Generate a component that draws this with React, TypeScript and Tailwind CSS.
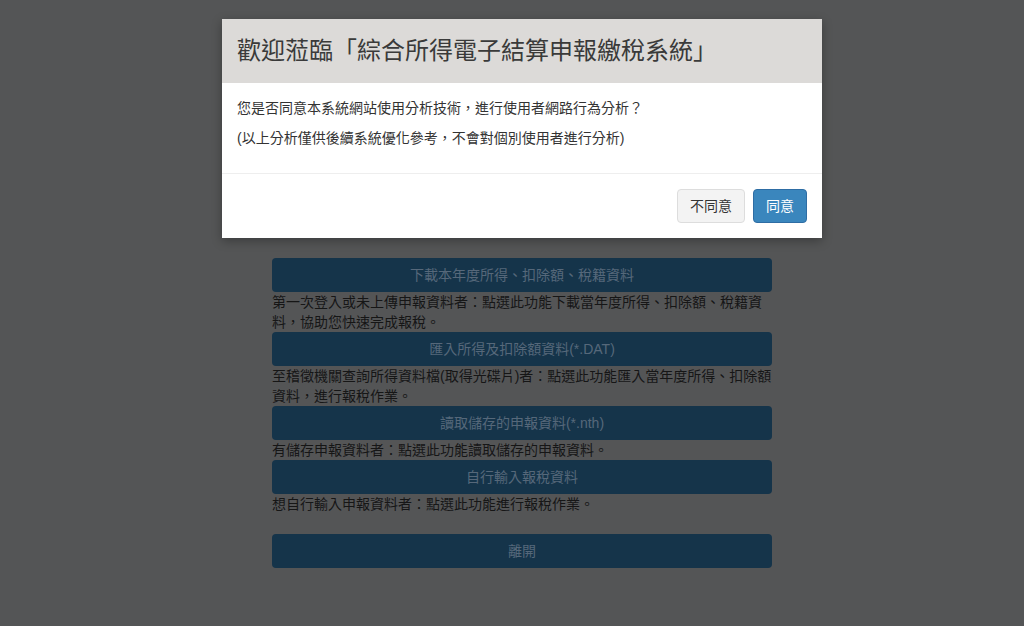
import React from 'react';

const font = { fontFamily: '"Liberation Sans", "Noto Sans CJK TC", sans-serif' };

// 背景頁面上的功能按鈕與說明
const actions = [
  {
    label: '下載本年度所得、扣除額、稅籍資料',
    desc: '第一次登入或未上傳申報資料者：點選此功能下載當年度所得、扣除額、稅籍資料，協助您快速完成報稅。',
  },
  {
    label: '匯入所得及扣除額資料(*.DAT)',
    desc: '至稽徵機關查詢所得資料檔(取得光碟片)者：點選此功能匯入當年度所得、扣除額資料，進行報稅作業。',
  },
  {
    label: '讀取儲存的申報資料(*.nth)',
    desc: '有儲存申報資料者：點選此功能讀取儲存的申報資料。',
  },
  {
    label: '自行輸入報稅資料',
    desc: '想自行輸入申報資料者：點選此功能進行報稅作業。',
  },
];

const App = () => {
  return (
    <div className="relative min-h-screen bg-[#545556] overflow-hidden" style={font}>
      {/* Page behind the modal (already dimmed) */}
      <div className="flex justify-center pl-[20px] pt-[258px]">
        <div className="w-[500px] flex flex-col text-[14px] leading-[20px]">
          {actions.map(a => (
            <div key={a.label}>
              <div className="h-[34px] rounded-[4px] bg-[#15344a] text-[#56687a] flex items-center justify-center">
                {a.label}
              </div>
              <p className="text-[#161616]">{a.desc}</p>
            </div>
          ))}
          <div className="mt-[20px] h-[34px] rounded-[4px] bg-[#15344a] text-[#56687a] flex items-center justify-center">
            離開
          </div>
        </div>
      </div>

      {/* Modal */}
      <div className="absolute left-[222px] top-[19px] w-[600px] bg-white shadow-[0_3px_10px_rgba(0,0,0,0.3)]">
        <div className="bg-[#dcdad8] px-[15px] py-[15px]">
          <h4 className="text-[24px] leading-[34px] text-[#3a3a3a]">歡迎蒞臨「綜合所得電子結算申報繳稅系統」</h4>
        </div>
        <div className="p-[15px] text-[14px] leading-[20px] text-[#333]">
          <p className="mb-[10px]">您是否同意本系統網站使用分析技術，進行使用者網路行為分析？</p>
          <p className="mb-[10px]">(以上分析僅供後續系統優化參考，不會對個別使用者進行分析)</p>
        </div>
        <div className="border-t border-[#eeeeee] p-[15px] flex justify-end gap-[8px]">
          <button className="h-[34px] px-[12px] text-[14px] text-[#333] bg-[#f3f3f3] border border-[#dddddd] rounded-[4px]">
            不同意
          </button>
          <button className="h-[34px] px-[12px] text-[14px] text-white bg-[#3a86bd] border border-[#2e6da4] rounded-[4px]">
            同意
          </button>
        </div>
      </div>
    </div>
  );
};

export default App;
